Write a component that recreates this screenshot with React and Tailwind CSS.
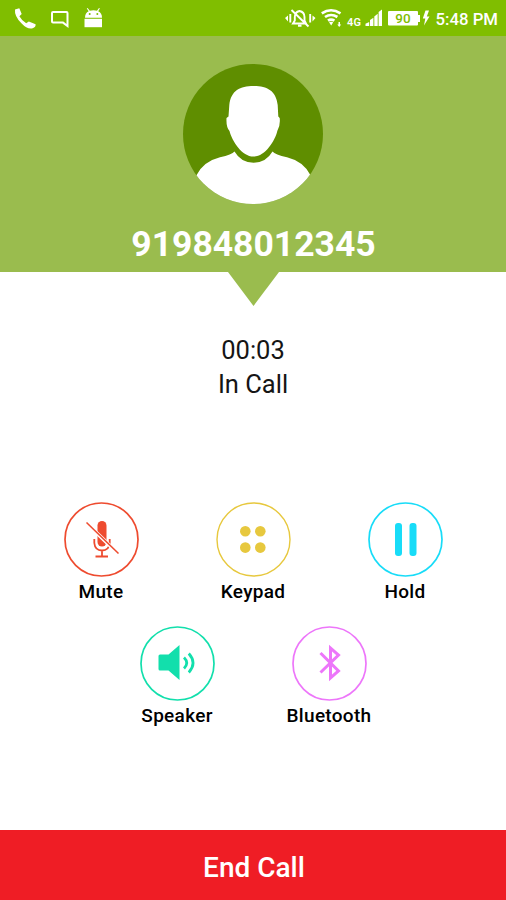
function StatusBar() {
  return (
    <header className="flex h-9 shrink-0 bg-[#80be00]">
      <svg className="h-9 w-full" viewBox="0 0 506 36" fill="#fff">
        <path d="M15 9.5 19.3 8.2 21.7 14 19.4 16.3Q21.6 20.5 26.2 23.2L28.8 21.4 35.6 24.2Q36 27 32.6 28.3 27.5 29.7 21.4 23.2 14.2 16.2 15 9.5Z" />
        <path d="M53 12H66.5Q67.5 12 67.5 13V26L63 22.6H53Q52 22.6 52 21.6V13Q52 12 53 12Z" fill="none" stroke="#fff" strokeWidth="2" />
        <path d="M85 17.8Q85 13.2 88.7 11.3L86.8 8.6 87.6 8 89.8 10.8Q93.5 9.7 97 10.8L99 8 99.9 8.6 98.2 11.3Q102 13.2 102 17.8Z" />
        <path d="M84.5 18.8H102V27.2H84.5Z" />
        <circle cx="89.7" cy="14" r="1" fill="#80be00" />
        <circle cx="97.3" cy="14" r="1" fill="#80be00" />
        <path d="M285 18 288 15.6V21.4ZM315.5 18 312.5 15.6V21.4Z" />
        <path d="M290.3 14V22.5M310.2 14V22.5M293 23.5H306L304.5 20.5V17Q304.5 12 299.5 11 294.8 12 294.8 17V20.5ZM298 25.8H301.5M291.5 10 308.5 26.5" fill="none" stroke="#fff" strokeWidth="1.9" />
        <path d="M321.8 13.3Q331 7.2 340.5 13.3M325 17Q331 13 337.4 17M328 20.7Q331 18.6 334.4 20.7" fill="none" stroke="#fff" strokeWidth="2.7" />
        <path d="M329 22.2Q331.2 21.2 333.2 22.2L331.2 25.5ZM338.5 22H340V24.5H341.2L339.2 27 337.3 24.5H338.5Z" />
        <text x="347" y="26" fontFamily="Roboto, sans-serif" fontWeight="600" fontSize="11" textLength="14">4G</text>
        <path d="M365.5 26V23.8L369.2 22V26ZM370 26V20L373.4 17.7V26ZM374.3 26V16.5L377.7 13.8V26ZM378.6 26V12L382 9.5V26Z" />
        <path d="M389 11H417Q418 11 418 12V15H420V22H418V24.5Q418 25.5 417 25.5H389Q388 25.5 388 24.5V12Q388 11 389 11Z" />
        <text x="403" y="23" textAnchor="middle" fill="#80be00" fontFamily="Roboto, sans-serif" fontWeight="500" fontSize="13.5">90</text>
        <path d="M425.5 10.5 422.8 18.5H425.3L424 25.5 429.5 16.5H426.8L429 10.5Z" />
        <text x="435.5" y="24.5" fontFamily="Roboto, sans-serif" fontWeight="500" fontSize="17.4" textLength="62.5" lengthAdjust="spacingAndGlyphs">5:48 PM</text>
      </svg>
    </header>
  );
}

function Avatar() {
  return (
    <svg className="h-[140px] w-[140px]" viewBox="0 0 140 140">
      <defs>
        <clipPath id="avatar">
          <circle cx="70" cy="70" r="70" />
        </clipPath>
      </defs>
      <circle cx="70" cy="70" r="70" fill="#5f8e00" />
      <g clipPath="url(#avatar)" fill="#fff">
        <path d="M70.5 22C57 22 48 26.5 46.3 41L45.5 52.5 43.5 54Q43 63 46.5 67C49 77 59 92.6 70.5 92.6S92 77 94.3 67Q97.5 62 96.7 54L95.3 52.5 94.7 41C93 26.5 84 22 70.5 22Z" />
        <path d="M51.5 87.5Q58 98.7 70.5 98.7T89.5 87.5Q92 90.5 104 93.3 121 97.5 128 112L140 140H0L13 112Q20 97.5 37 93.3 49 90.5 51.5 87.5Z" />
      </g>
    </svg>
  );
}

function Action({ label, color, border = 1.7, children }) {
  return (
    <div className="flex w-[152px] flex-col items-center">
      <svg className="h-[75px] w-[75px]" viewBox="0 0 75 75" fill={color} stroke="none">
        <circle cx="37.5" cy="37.5" r="36.5" fill="none" stroke={color} strokeWidth={border} />
        {children}
      </svg>
      <span className="mt-0.5 mb-px text-[19px] leading-[26px] font-medium tracking-[0.3px] text-black">{label}</span>
    </div>
  );
}

export default function App() {
  return (
    <div className="flex h-[900px] w-[506px] flex-col overflow-hidden bg-white font-['Roboto',sans-serif] text-[#151515]">
      <StatusBar />
      <section className="flex h-[236px] shrink-0 flex-col items-center bg-[#9abc4e] pt-7">
        <Avatar />
        <h1 className="mt-[19px] pl-px text-[35.5px] leading-[42px] font-bold text-white">919848012345</h1>
      </section>
      <svg className="h-[34px] w-[51px] shrink-0 self-center" viewBox="0 0 51 34">
        <path d="M0 0H51L25.5 34Z" fill="#9abc4e" />
      </svg>
      <section className="mt-[27px] flex flex-col items-center text-[25.5px] leading-[34px]">
        <p>00:03</p>
        <p>In Call</p>
      </section>
      <section className="mt-[101px] flex flex-1 flex-col gap-5">
        <div className="flex justify-center">
          <Action label="Mute" color="#ee4b2f">
            <rect x="33.5" y="19" width="9" height="25.5" rx="4.5" />
            <path d="M30.3 37V41Q31 48.5 38 48.5T45.7 41V37M38 48.5V54M31.5 54.5H44" fill="none" stroke="#ee4b2f" strokeWidth="1.8" />
            <path d="M24 24 54.5 53.5" stroke="#fff" strokeWidth="1.5" />
            <path d="M22.5 20.5 54.5 51.5" stroke="#fff" strokeWidth="3" />
            <path d="M22.5 20.5 54.5 51.5" stroke="#ee4b2f" strokeWidth="1.6" />
          </Action>
          <Action label="Keypad" color="#e7c83e" border={1.4}>
            <circle cx="29.3" cy="29.2" r="5.3" />
            <circle cx="44.3" cy="29.2" r="5.3" />
            <circle cx="29.3" cy="45.6" r="5.3" />
            <circle cx="44.3" cy="45.6" r="5.3" />
          </Action>
          <Action label="Hold" color="#18dcf8">
            <rect x="27" y="21" width="7" height="33" rx="3" />
            <rect x="41.5" y="21" width="7" height="33" rx="3" />
          </Action>
        </div>
        <div className="flex justify-center">
          <Action label="Speaker" color="#12dfac">
            <path d="M20 28.5H28.5L39.5 19V54L28.5 44.5H20Q18.5 44.5 18.5 43V30Q18.5 28.5 20 28.5Z" />
            <path d="M44 31.5Q49.5 37 44 42.5M48.8 27.5Q57.3 37 48.8 46.5" fill="none" stroke="#12dfac" strokeWidth="2.7" />
          </Action>
          <Action label="Bluetooth" color="#ed76fa">
            <path d="M28.5 27 46.5 45 38.5 52V22L46.5 29 28.5 46.5" fill="none" stroke="#ed76fa" strokeWidth="3" />
          </Action>
        </div>
      </section>
      <button className="h-[70px] shrink-0 bg-[#ef1d25] pt-1.5 pl-0.5 text-[28px] font-medium text-white">End Call</button>
    </div>
  );
}
